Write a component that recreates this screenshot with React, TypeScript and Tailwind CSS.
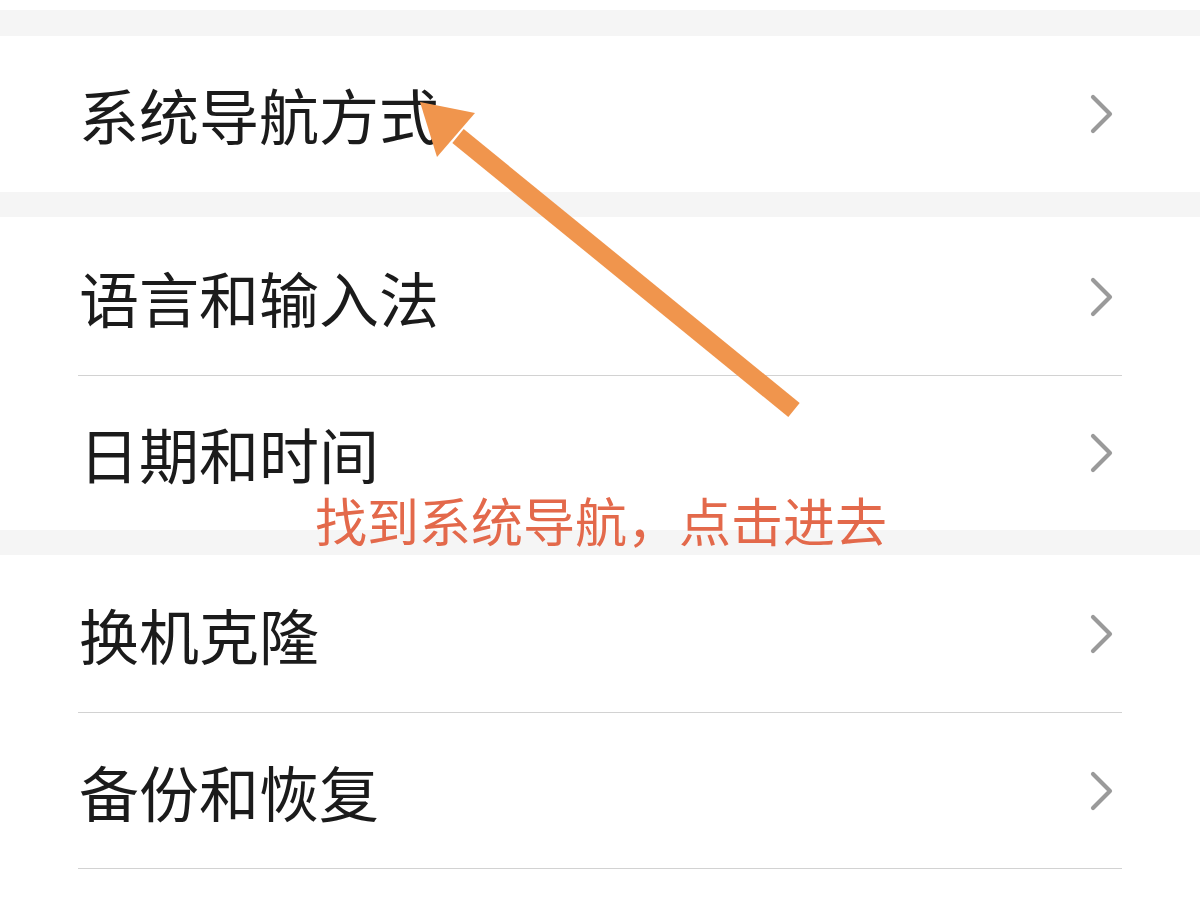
import React from "react";

const Chevron = () => (
  <svg width="28" height="40" viewBox="0 0 28 40" fill="none">
    <path
      d="M5 3 L22 20 L5 37"
      stroke="#9a9a9a"
      strokeWidth="4.2"
      strokeLinecap="round"
      strokeLinejoin="round"
    />
  </svg>
);

const Row = ({ label, h, divider }: { label: string; h: string; divider?: boolean }) => (
  <div className={`flex items-center justify-between pl-[79px] pr-[84px] ${h} relative`}>
    <span className="text-[60px] leading-none text-[#1b1b1b]">{label}</span>
    <Chevron />
    {divider && <div className="absolute left-[78px] right-[78px] bottom-0 h-px bg-[#d2d2d2]" />}
  </div>
);

const Gap = ({ h }: { h: string }) => <div className={`${h} bg-[#f5f5f5]`} />;

export default function App() {
  return (
    <div
      className="relative w-[1200px] h-[904px] overflow-hidden bg-white"
      style={{ fontFamily: '"Noto Sans CJK SC", "Noto Sans", sans-serif' }}
    >
      <div className="h-[10px]" />
      <Gap h="h-[26px]" />
      <Row label="系统导航方式" h="h-[156px]" />
      <Gap h="h-[25px]" />
      <Row label="语言和输入法" h="h-[159px]" divider />
      <Row label="日期和时间" h="h-[154px]" />
      <Gap h="h-[25px]" />
      <Row label="换机克隆" h="h-[158px]" divider />
      <Row label="备份和恢复" h="h-[156px]" divider />

      <div className="absolute left-[315px] top-[494px] text-[52px] leading-none text-[#e3694b]">
        找到系统导航，点击进去
      </div>

      <svg className="absolute left-0 top-0" width="1200" height="904" viewBox="0 0 1200 904">
        <line x1="794" y1="410" x2="458" y2="136" stroke="#f0954d" strokeWidth="18" />
        <polygon points="420,102 475,113 437,157" fill="#f0954d" />
      </svg>
    </div>
  );
}
